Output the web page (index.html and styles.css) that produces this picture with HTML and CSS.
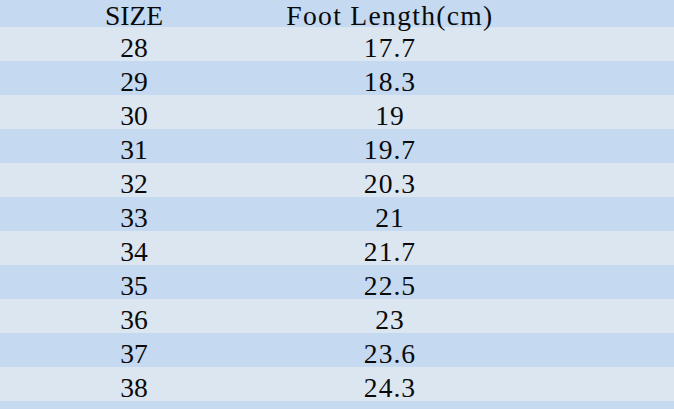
FILE: index.html
```html
<!DOCTYPE html>
<html>
<head>
<meta charset="utf-8">
<link rel="stylesheet" href="styles.css">
</head>
<body>
<div class="table">
  <div class="row head"><div class="c1">SIZE</div><div class="c2 wide">Foot Length(cm)</div></div>
  <div class="row"><div class="c1">28</div><div class="c2">17.7</div></div>
  <div class="row"><div class="c1">29</div><div class="c2">18.3</div></div>
  <div class="row"><div class="c1">30</div><div class="c2">19</div></div>
  <div class="row"><div class="c1">31</div><div class="c2">19.7</div></div>
  <div class="row"><div class="c1">32</div><div class="c2">20.3</div></div>
  <div class="row"><div class="c1">33</div><div class="c2">21</div></div>
  <div class="row"><div class="c1">34</div><div class="c2">21.7</div></div>
  <div class="row"><div class="c1">35</div><div class="c2">22.5</div></div>
  <div class="row"><div class="c1">36</div><div class="c2">23</div></div>
  <div class="row"><div class="c1">37</div><div class="c2">23.6</div></div>
  <div class="row"><div class="c1">38</div><div class="c2">24.3</div></div>
  <div class="row tail"></div>
</div>
</body>
</html>
```

FILE: styles.css
```css
html, body {
  margin: 0;
  padding: 0;
  width: 674px;
  height: 409px;
  overflow: hidden;
  background: #c5d9f1;
}
.table {
  font-family: "Liberation Serif", "Times New Roman", serif;
  font-size: 27.6px;
  color: #0a0a0a;
}
.row {
  display: grid;
  grid-template-columns: 268px 244px 1fr;
  height: 34px;
  box-sizing: border-box;
  padding-top: 7px;
  line-height: 27px;
  background: #c5d9f1;
}
.row:nth-child(even) {
  background: #dce6f1;
}
.row.head {
  height: 27px;
  padding-top: 0;
  line-height: 31px;
}
.row.tail {
  height: 8px;
  padding-top: 0;
}
.c1, .c2 {
  text-align: center;
  white-space: nowrap;
}
.c2 {
  letter-spacing: 1px;
}
.wide {
  letter-spacing: 1.3px;
}
```
